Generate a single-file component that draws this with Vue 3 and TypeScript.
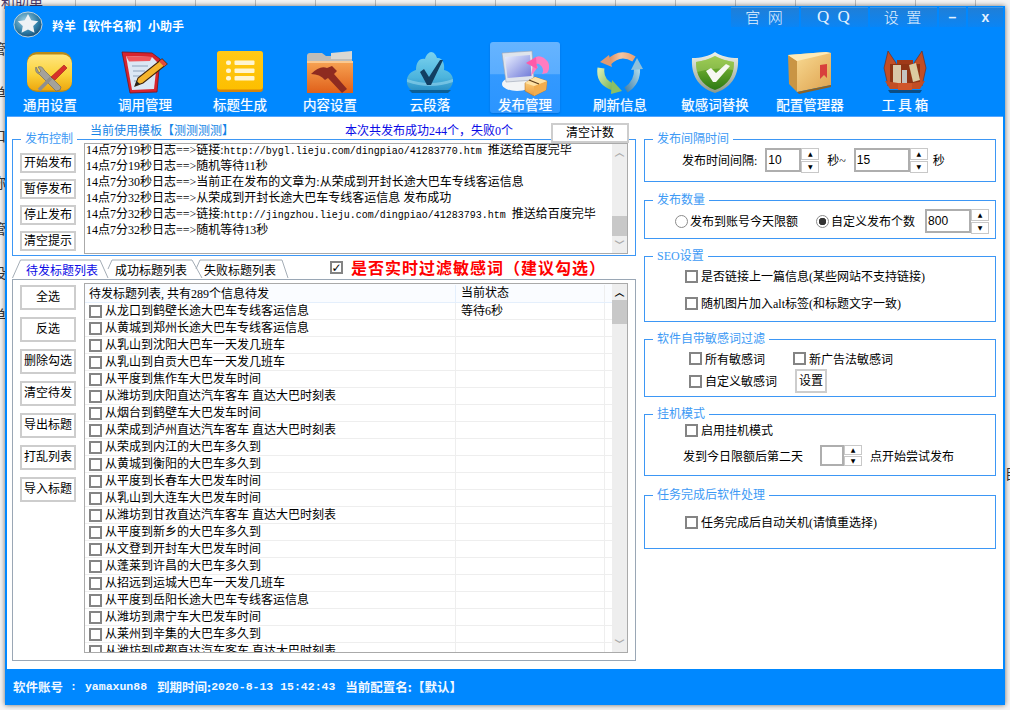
<template>
  <div class="desktop">
    <span class="stray top">和助单</span>
    <span v-for="y in strayLeft" :key="y.top" class="stray side" :style="{ top: y.top + 'px' }">{{ y.ch }}</span>
    <span class="stray right">目</span>

    <div class="window">
      <div class="titlebar">
        <svg class="logo" viewBox="0 0 30 28">
          <defs>
            <radialGradient id="lg" cx="0.4" cy="0.35" r="0.75">
              <stop offset="0" stop-color="#9fd0e4" />
              <stop offset="0.6" stop-color="#2e7ea8" />
              <stop offset="1" stop-color="#123f66" />
            </radialGradient>
          </defs>
          <ellipse cx="15" cy="14" rx="14.6" ry="13" fill="url(#lg)" stroke="#c4d4dc" stroke-width="1" />
          <path d="M15 3l3.4 6.6 7.2 1-5.2 5 1.3 7-6.7-3.4-6.7 3.4 1.3-7-5.2-5 7.2-1z" fill="#eef2f6" />
        </svg>
        <span class="app-name">羚羊【软件名称】小助手</span>
        <div class="top-btns">
          <div class="top-btn w68">官 网</div>
          <div class="top-btn w67 qq">Q Q</div>
          <div class="top-btn w67">设 置</div>
          <div class="top-btn w27 sym">–</div>
          <div class="top-btn w35 sym">x</div>
        </div>
      </div>

      <div class="toolbar">
        <div v-for="t in tools" :key="t.label" class="tool" :class="{ active: t.active, shift: t.shift }">
          <svg class="tool-icon" viewBox="0 0 48 48" v-html="t.icon"></svg>
          <span class="tool-label">{{ t.label }}</span>
        </div>
      </div>

      <div class="content">
        <div class="left">
          <div class="tmpl-row">
            <span class="tmpl">当前使用模板【测测测测】</span>
            <span class="count">本次共发布成功244个，失败0个</span>
            <button class="btn clear-count">清空计数</button>
          </div>

          <div class="group control">
            <span class="legend">发布控制</span>
            <div class="ctl-btns">
              <button v-for="b in controlBtns" :key="b" class="btn">{{ b }}</button>
            </div>
            <div class="log">
              <div class="log-lines">
                <div v-for="(l, i) in logs" :key="i" class="log-line">
                  {{ l.text }}<span v-if="l.url" class="url">{{ l.url }}</span>{{ l.tail }}
                </div>
              </div>
              <div class="vscroll log-scroll">
                <span class="arrow up">︿</span>
                <span class="thumb"></span>
                <span class="arrow down">﹀</span>
              </div>
            </div>
          </div>

          <div class="tabstrip">
            <svg class="tab-lines" width="280" height="22" viewBox="0 0 280 22">
              <path d="M0.5 21L8.5 3H88L96 21M96 12L100 3H180L190 21M184 12L188 3H270L276 21" fill="none" stroke="#a4adb6" />
            </svg>
            <span class="tab on">待发标题列表</span>
            <span class="tab">成功标题列表</span>
            <span class="tab">失败标题列表</span>
            <span class="box checked filter-box"><i>✓</i></span>
            <span class="filter-text">是否实时过滤敏感词（建议勾选）</span>
          </div>

          <div class="tabpanel">
            <div class="list-btns">
              <button v-for="b in listBtns" :key="b" class="btn">{{ b }}</button>
            </div>
            <div class="list">
              <div class="list-body">
                <div class="row head">
                  <span class="c1 head-c1">待发标题列表, 共有289个信息待发</span>
                  <span class="c2">当前状态</span>
                </div>
                <div v-for="(r, i) in rows" :key="i" class="row">
                  <span class="c1"><span class="box"></span>{{ r }}</span>
                  <span class="c2">{{ i === 0 ? '等待6秒' : '' }}</span>
                </div>
              </div>
              <div class="vscroll list-scroll">
                <span class="arrow up dark">︿</span>
                <span class="thumb"></span>
                <span class="arrow down">﹀</span>
              </div>
            </div>
          </div>
        </div>

        <div class="right">
          <div class="group g1">
            <span class="legend">发布间隔时间</span>
            <div class="line interval">
              <span>发布时间间隔:</span>
              <div class="spin w36 ml8"><span class="spin-val">10</span></div>
              <div class="spin-btns"><b>▲</b><b>▼</b></div>
              <span class="ml8">秒~</span>
              <div class="spin w56 ml8"><span class="spin-val">15</span></div>
              <div class="spin-btns"><b>▲</b><b>▼</b></div>
              <span class="ml5">秒</span>
            </div>
          </div>

          <div class="group g2">
            <span class="legend">发布数量</span>
            <div class="line amount">
              <span class="radio"></span><span>发布到账号今天限额</span>
              <span class="radio on ml18"></span><span>自定义发布个数</span>
              <div class="spin w46 ml10"><span class="spin-val">800</span></div>
              <div class="spin-btns"><b>▲</b><b>▼</b></div>
            </div>
          </div>

          <div class="group g3">
            <span class="legend">SEO设置</span>
            <div class="line chk first"><span class="box"></span>是否链接上一篇信息(某些网站不支持链接)</div>
            <div class="line chk second"><span class="box"></span>随机图片加入alt标签(和标题文字一致)</div>
          </div>

          <div class="group g4">
            <span class="legend">软件自带敏感词过滤</span>
            <div class="sens">
              <div class="sens-cell"><span class="box"></span>所有敏感词</div>
              <div class="sens-cell"><span class="box"></span>新广告法敏感词</div>
              <div class="sens-cell"><span class="box"></span>自定义敏感词</div>
              <div class="sens-cell"><button class="btn set-btn">设置</button></div>
            </div>
          </div>

          <div class="group g5">
            <span class="legend">挂机模式</span>
            <div class="line chk hang"><span class="box"></span>启用挂机模式</div>
            <div class="line next-day">
              <span>发到今日限额后第二天</span>
              <div class="spin small"></div>
              <div class="spin-btns small-btns"><b>▲</b><b>▼</b></div>
              <span class="ml8">点开始尝试发布</span>
            </div>
          </div>

          <div class="group g6">
            <span class="legend">任务完成后软件处理</span>
            <div class="line chk done"><span class="box"></span>任务完成后自动关机(请慎重选择)</div>
          </div>
        </div>
      </div>

      <div class="statusbar">
        <span>软件账号</span><span class="sb-lat colon">:</span><span class="sb-lat">yamaxun88</span>
        <span class="ml10">到期时间:</span><span class="sb-lat">2020-8-13 15:42:43</span>
        <span class="ml10">当前配置名:【默认】</span>
      </div>
    </div>
  </div>
</template>

<script setup lang="ts">
interface Tool {
  label: string;
  icon: string;
  active?: boolean;
  shift?: boolean;
}

interface LogLine {
  text: string;
  url?: string;
  tail?: string;
}

const strayLeft = [
  { top: 38, ch: '管' },
  { top: 82, ch: '单' },
  { top: 125, ch: '口' },
  { top: 172, ch: '称' },
  { top: 218, ch: '管' },
  { top: 262, ch: '设' },
  { top: 304, ch: '单' },
];

const controlBtns = ['开始发布', '暂停发布', '停止发布', '清空提示'];
const listBtns = ['全选', '反选', '删除勾选', '清空待发', '导出标题', '打乱列表', '导入标题'];

const logs: LogLine[] = [
  { text: '14点7分19秒日志==>链接:', url: 'http://bygl.lieju.com/dingpiao/41283770.htm', tail: '\u00a0\u00a0推送给百度完毕' },
  { text: '14点7分19秒日志==>随机等待11秒' },
  { text: '14点7分30秒日志==>当前正在发布的文章为:从荣成到开封长途大巴车专线客运信息' },
  { text: '14点7分32秒日志==>从荣成到开封长途大巴车专线客运信息 发布成功' },
  { text: '14点7分32秒日志==>链接:', url: 'http://jingzhou.lieju.com/dingpiao/41283793.htm', tail: '\u00a0\u00a0推送给百度完毕' },
  { text: '14点7分32秒日志==>随机等待13秒' },
];

const rows = [
  '从龙口到鹤壁长途大巴车专线客运信息',
  '从黄城到郑州长途大巴车专线客运信息',
  '从乳山到沈阳大巴车一天发几班车',
  '从乳山到自贡大巴车一天发几班车',
  '从平度到焦作车大巴发车时间',
  '从潍坊到庆阳直达汽车客车 直达大巴时刻表',
  '从烟台到鹤壁车大巴发车时间',
  '从荣成到泸州直达汽车客车 直达大巴时刻表',
  '从荣成到内江的大巴车多久到',
  '从黄城到衡阳的大巴车多久到',
  '从平度到长春车大巴发车时间',
  '从乳山到大连车大巴发车时间',
  '从潍坊到甘孜直达汽车客车 直达大巴时刻表',
  '从平度到新乡的大巴车多久到',
  '从文登到开封车大巴发车时间',
  '从蓬莱到许昌的大巴车多久到',
  '从招远到运城大巴车一天发几班车',
  '从平度到岳阳长途大巴车专线客运信息',
  '从潍坊到肃宁车大巴发车时间',
  '从莱州到辛集的大巴车多久到',
  '从潍坊到成都直达汽车客车 直达大巴时刻表',
];

const tools: Tool[] = [
  {
    label: '通用设置',
    icon: `<defs><linearGradient id="i1" x1="0" y1="0" x2="0" y2="1"><stop offset="0" stop-color="#ffe680"/><stop offset="0.55" stop-color="#fbd23a"/><stop offset="1" stop-color="#eda70e"/></linearGradient></defs>
      <rect x="1" y="4" width="45" height="40" rx="10" fill="#b98a18"/>
      <rect x="1" y="6.5" width="45" height="36" rx="9" fill="url(#i1)"/>
      <path d="M10 19c-1 3 0 6 3 7l17 17 4-1 1-3-17-17c-1-3-4-4-6-3l3 4-2 2z" fill="#a5a29a" stroke="#6f6c64" stroke-width=".7"/>
      <path d="M25 30L13 42" stroke="#8f8f8f" stroke-width="3.6"/>
      <path d="M38 17l3 3-12 12-4-3z" fill="#d8312a" stroke="#9c1c18" stroke-width=".6"/>`,
  },
  {
    label: '调用管理',
    icon: `<path d="M1 4l30 1 8 6-3 33-27 1z" fill="#d7242e" stroke="#7c1418" stroke-width=".8"/>
      <path d="M5 8l26 1 5 5-3 27-22 1z" fill="#dbe7f5"/>
      <path d="M5 8l26 1-2 4-21 .5z" fill="#f0565c"/>
      <path d="M11 18h16M12 23h12M12 28h9M13 33h7" stroke="#8ea3bd" stroke-width="1.2"/>
      <path d="M41 11l5 5-24 19-8 3 3-8z" fill="#f5b52c" stroke="#40240c" stroke-width="1.1"/>
      <path d="M14 38l1.5-5 3.500 3z" fill="#222"/>
      <path d="M41 11l5 5-3 2.500-5-5z" fill="#e24a3a"/>`,
  },
  {
    label: '标题生成',
    icon: `<defs><linearGradient id="i3" x1="0" y1="0" x2="0" y2="1"><stop offset="0" stop-color="#ffc916"/><stop offset="1" stop-color="#fdbf00"/></linearGradient></defs>
      <rect x="1" y="3" width="46" height="41" rx="3" fill="#d88408"/>
      <rect x="1" y="3" width="46" height="38.500" rx="3" fill="url(#i3)"/>
      <g fill="#fff5d0"><rect x="10" y="12.500" width="5" height="4.500" rx="2"/><rect x="10" y="20.500" width="5" height="4.500" rx="2"/><rect x="10" y="28" width="5" height="4.500" rx="2"/>
      <rect x="18.500" y="12.500" width="20" height="4.500" rx="1"/><rect x="18.500" y="20.500" width="20" height="4.500" rx="1"/><rect x="18.500" y="28" width="20" height="4.500" rx="1"/></g>`,
  },
  {
    label: '内容设置',
    shift: true,
    icon: `<defs><linearGradient id="i4" x1="0" y1="0" x2="0" y2="1"><stop offset="0" stop-color="#f7a454"/><stop offset="1" stop-color="#e0601a"/></linearGradient></defs>
      <path d="M1 8q0-3 3-3h12l4 3h22q4 0 4 4v8H1z" fill="#bdbcb8"/>
      <path d="M25 5l21-2v8H25z" fill="#d9d8d2"/>
      <path d="M1 13h46v32H1z" fill="url(#i4)"/>
      <path d="M1 13h46v2H1z" fill="#fbc88f"/>
      <path d="M5 26q9-9 16-6l5-2 5 5-3 3 13 15-5 4-14-15-3 2q-5-6-14-6z" fill="#8e2b20"/>`,
  },
  {
    label: '云段落',
    icon: `<defs><linearGradient id="i5" x1="0" y1="0" x2="0" y2="1"><stop offset="0" stop-color="#7cd2ee"/><stop offset="0.65" stop-color="#4cb4dd"/><stop offset="1" stop-color="#2a8fc4"/></linearGradient></defs>
      <path d="M10 43C3 43 0 37 1 31c1-5 5-8 9-9 0-7 3-12 9-11 1-4 4-7 6-7 3 0 5 3 6 6 5-1 8 5 7 12 5 1 9 5 9 10 0 6-4 11-9 11z" fill="url(#i5)"/>
      <path d="M6 45h36l3-3H3z" fill="#0d5f95"/>
      <path d="M1 31q23 8 46 0v3q-23 8-46 0z" fill="#a6e0f4" opacity=".5"/>
      <path d="M14 24l4-3 5 8 11-17h3L25 37h-4z" fill="#123f62"/>`,
  },
  {
    label: '发布管理',
    active: true,
    icon: `<defs><linearGradient id="i6" x1="0" y1="0" x2="1" y2="1"><stop offset="0" stop-color="#eaf0ff"/><stop offset="1" stop-color="#6e78d8"/></linearGradient><linearGradient id="i6b" x1="0" y1="0" x2="0" y2="1"><stop offset="0" stop-color="#ffdb8c"/><stop offset="1" stop-color="#ec9c3c"/></linearGradient></defs>
      <ellipse cx="16" cy="36" rx="15" ry="7" fill="#f2f4f6"/>
      <path d="M1 5l30-2 2 29-28 2z" fill="#dfe4ec" stroke="#9aa3b4" stroke-width=".6"/>
      <path d="M4 9l25-2 1.500 21-24 2z" fill="url(#i6)"/>
      <path d="M30 28l3-17c3-5 10-3 14 3 2 4 1 9-1 11l-5 1c2-3 1-7-2-9-2-2-4-1-4 0l2 2z" fill="#ff7cc0"/>
      <path d="M25 15l10-6 1 12z" fill="#ff5aa8"/>
      <path d="M24 35l10-6 12 4-1 9-12 6-9-5z" fill="url(#i6b)" stroke="#b06c1c" stroke-width=".5"/>
      <path d="M33 38l13-5-1 9-12 6z" fill="#f2ad4e"/>
      <path d="M24 35l9 3 13-5-12-4z" fill="#ffe2a4"/>
      <path d="M28 32l10 4" stroke="#5c3b18" stroke-width="1.200"/>`,
  },
  {
    label: '刷新信息',
    icon: `<defs><linearGradient id="i7a" x1="0" y1="0" x2="1" y2="0"><stop offset="0" stop-color="#d88a5e"/><stop offset=".5" stop-color="#f6c6a0"/><stop offset="1" stop-color="#e8a276"/></linearGradient><linearGradient id="i7b" x1="0" y1="0" x2="1" y2="1"><stop offset="0" stop-color="#d6ecae"/><stop offset="1" stop-color="#7eb65a"/></linearGradient><linearGradient id="i7c" x1="0" y1="1" x2="1" y2="0"><stop offset="0" stop-color="#4c84a8"/><stop offset="1" stop-color="#a6d4e8"/></linearGradient></defs>
      <path d="M12 15Q24 2 38 11" fill="none" stroke="url(#i7a)" stroke-width="6"/>
      <path d="M4 14l9-7 3 12z" fill="#e09a72"/>
      <path d="M5 20Q3 34 17 39" fill="none" stroke="url(#i7b)" stroke-width="7"/>
      <path d="M26 43L16 32l-1 14z" fill="#8cc064"/>
      <path d="M30 42Q42 34 41 20" fill="none" stroke="url(#i7c)" stroke-width="6"/>
      <path d="M41 10l-6 12 12-1z" fill="#8ec0da"/>`,
  },
  {
    label: '敏感词替换',
    icon: `<defs><linearGradient id="i8" x1="0" y1="0" x2="0" y2="1"><stop offset="0" stop-color="#8cc23c"/><stop offset="1" stop-color="#2c7a14"/></linearGradient><linearGradient id="i8r" x1="0" y1="0" x2="0" y2="1"><stop offset="0" stop-color="#eef2ec"/><stop offset="1" stop-color="#8c9a8a"/></linearGradient></defs>
      <path d="M24 4c6 4 14 6 23 6 1 16-5 29-23 35C6 39 0 26 1 10c9 0 17-2 23-6z" fill="url(#i8r)"/>
      <path d="M24 8c5 3 12 5 19 6 0 13-5 23-19 28C10 37 5 27 5 14c7-1 14-3 19-6z" fill="url(#i8)"/>
      <path d="M5 14c7-1 14-3 19-6 5 3 12 5 19 6 0 3 0 6-1 8q-18-4-36 2-1-5-1-10z" fill="#b4d872" opacity=".45"/>
      <path d="M15 23l5-3 5 5 10-9 4 2-14 16h-3z" fill="#f6f8f2"/>`,
  },
  {
    label: '配置管理器',
    icon: `<defs><linearGradient id="i9" x1="0" y1="0" x2="1" y2="1"><stop offset="0" stop-color="#fbe09a"/><stop offset="1" stop-color="#dea24e"/></linearGradient></defs>
      <path d="M2 7L40 4l5 1v32L11 44z" fill="url(#i9)"/>
      <path d="M2 7l9 6v31L3 36z" fill="#c99544"/>
      <path d="M2 7l9 6 34-8-5-1z" fill="#fdeab8"/>
      <path d="M34 17l7-1v14l-3-3-4 4z" fill="#d8403c"/>
      <path d="M11 44l34-7v2L13 46z" fill="#8c6224"/>`,
  },
  {
    label: '工 具 箱',
    icon: `<path d="M3 20L7 3l8 12 1 15-9 8z" fill="#c24e25" stroke="#6e2410" stroke-width=".6"/>
      <path d="M45 20L41 3l-8 12-1 15 9 8z" fill="#c24e25" stroke="#6e2410" stroke-width=".6"/>
      <path d="M16 12h16v4H16z" fill="#a03a18"/>
      <path d="M9 16h30v22H9z" fill="#8f3414"/>
      <path d="M12 17h8v18h-8z" fill="#d8c8a8"/>
      <path d="M21 22h5v16h-5z" fill="#c4c4c0"/>
      <path d="M28 17l7-2 4 17-7 2z" fill="#dccba0"/>
      <path d="M4 33l13 2v6H9z" fill="#c24e25"/>
      <path d="M44 33l-13 2v6h8z" fill="#c24e25"/>
      <path d="M17 35h14v9H17z" fill="#d0562a"/>
      <path d="M7 42h34l-2 3H9z" fill="#0c4d84"/>`,
  },
];
</script>

<style>
html,
body {
  margin: 0;
  background: #f4f4f4;
}
</style>

<style scoped>
* {
  box-sizing: border-box;
}

.desktop {
  position: relative;
  width: 1010px;
  height: 710px;
  padding: 6px 5px 5px;
  overflow: hidden;
  font-family: 'Liberation Serif', 'Noto Sans CJK SC', serif;
  font-size: 12px;
  color: #000;
  background:
    repeating-linear-gradient(90deg, transparent 0, transparent 59px, #bdbdbd 59px, #bdbdbd 60px) 16px 0 / 100% 6px no-repeat,
    #f4f4f4;
}

.stray {
  position: absolute;
  font-size: 14px;
  color: #333;
}

.stray.top {
  top: -9px;
  left: 1px;
  color: #4b3a6a;
}

.stray.side {
  left: -8px;
}

.stray.right {
  top: 447px;
  left: 1005px;
}

.window {
  position: relative;
  display: flex;
  flex-direction: column;
  width: 1000px;
  height: 699px;
  background: #0088ff;
  box-shadow: 0 0 5px rgba(0, 0, 0, 0.55);
}

.titlebar {
  display: flex;
  align-items: flex-start;
  height: 36px;
  padding-left: 8px;
  color: #fff;
}

.logo {
  width: 30px;
  height: 27px;
  margin-top: 5px;
}

.app-name {
  margin: 11px 0 0 9px;
  font-size: 12px;
  font-weight: 700;
  font-family: 'Noto Sans CJK SC', sans-serif;
}

.top-btns {
  display: flex;
  gap: 2px;
  margin-left: auto;
  margin-right: 2px;
}

.top-btn {
  height: 20px;
  margin-top: 1px;
  line-height: 18px;
  text-align: center;
  font-size: 15px;
  color: #e4f2ff;
  background: linear-gradient(#1f7fd8, #0a85f5);
  border-top: 1px solid #3d95e4;
  font-family: 'Noto Sans CJK SC', sans-serif;
  font-weight: 300;
  letter-spacing: 2px;
}

.qq {
  font-family: 'Liberation Serif', serif;
  font-size: 17px;
}

.sym {
  font-family: 'Liberation Sans', sans-serif;
  font-weight: 700;
  letter-spacing: 0;
  font-size: 14px;
}

.w68 { width: 68px; }
.w67 { width: 67px; }
.w27 { width: 27px; }
.w35 { width: 35px; }

.toolbar {
  display: flex;
  gap: 25px;
  height: 74px;
  padding-left: 10px;
}

.tool {
  display: flex;
  flex-direction: column;
  align-items: center;
  flex: none;
  width: 70px;
  height: 71px;
  padding-top: 6px;
  border-radius: 3px;
}

.tool.shift {
  transform: translateX(-5px);
}

.tool.active {
  background: linear-gradient(#66b4ff 0, #5aadff 45%, #3399ff 46%, #2b95ff 100%);
  box-shadow: 0 1px 2px rgba(0, 60, 140, 0.35);
}

.tool-icon {
  flex: none;
  width: 48px;
  height: 48px;
}

.tool-label {
  margin-top: -1px;
  line-height: 18px;
  font-size: 13.500px;
  color: #fff;
  white-space: nowrap;
  font-family: 'Noto Sans CJK SC', sans-serif;
  text-shadow: 0 0 1px rgba(255, 255, 255, 0.6);
}

.content {
  display: flex;
  gap: 8px;
  height: 553px;
  margin: 0 2px;
  padding: 6px 7px 0 5px;
  background: #fff;
  border-top: 1px solid #55a6ff;
}

.left {
  position: relative;
  flex: none;
  width: 624px;
}

.tmpl-row {
  display: flex;
  height: 16px;
  padding-left: 78px;
  line-height: 16px;
}

.tmpl {
  width: 255px;
  color: #1584e6;
}

.count {
  color: #0a0ae6;
}

.btn {
  display: block;
  padding: 0;
  background: #fff;
  border: 2px solid #cdcdcd;
  font: inherit;
  color: #000;
}

.clear-count {
  position: absolute;
  top: 0;
  left: 539px;
  z-index: 2;
  width: 78px;
  height: 20px;
  line-height: 16px;
}

.group {
  position: relative;
  border: 1px solid #3d97f5;
}

.legend {
  position: absolute;
  top: -8px;
  left: 8px;
  padding: 0 4px;
  line-height: 14px;
  color: #3d9af5;
  background: #fff;
  white-space: nowrap;
}

.control {
  display: flex;
  gap: 8px;
  height: 117px;
  padding: 3px 7px 0;
}

.ctl-btns {
  display: flex;
  flex-direction: column;
  gap: 6px;
  flex: none;
  width: 56px;
  margin-top: 10px;
}

.ctl-btns .btn {
  height: 20px;
  line-height: 16px;
}

.log {
  display: flex;
  width: 544px;
  height: 111px;
  border: 1px solid #aaa;
  overflow: hidden;
}

.log-lines {
  display: flex;
  flex-direction: column;
  gap: 4px;
  flex: 1;
  padding: 0 1px;
  white-space: nowrap;
  overflow: hidden;
}

.log-line {
  height: 12px;
  line-height: 12px;
}

.url {
  font-family: 'Liberation Mono', monospace;
  font-size: 10px;
}

.vscroll {
  position: relative;
  flex: none;
  display: flex;
  flex-direction: column;
  width: 15px;
  background: #eee;
  color: #aaa;
}

.arrow {
  display: block;
  height: 16px;
  line-height: 16px;
  text-align: center;
  font-size: 10px;
  font-weight: 700;
  font-family: 'Noto Sans CJK SC', sans-serif;
}

.arrow.dark {
  color: #000;
}

.arrow.down {
  margin-top: auto;
}

.thumb {
  display: block;
  background: #c8c8c8;
}

.log-scroll .thumb {
  height: 20px;
  margin-top: 56px;
}

.list-scroll .thumb {
  height: 24px;
}

.tabstrip {
  position: relative;
  display: flex;
  align-items: center;
  height: 21px;
  margin-top: 2px;
  padding-left: 14px;
}

.tab-lines {
  position: absolute;
  left: 0;
  top: -1px;
}

.tab {
  position: relative;
  width: 89px;
  white-space: nowrap;
  padding-top: 3px;
}

.tab.on {
  color: #0a0ae6;
}

.filter-box {
  margin: 0 0 2px 37px;
}

.filter-text {
  margin: 0 0 3px 5px;
  font-family: 'Noto Sans CJK SC', sans-serif;
  font-size: 16px;
  font-weight: 700;
  letter-spacing: 1px;
  color: #f00;
  white-space: nowrap;
}

.tabpanel {
  display: flex;
  gap: 8px;
  height: 382px;
  padding: 3px 7px 0;
  border: 1px solid #9aa7b5;
}

.list-btns {
  display: flex;
  flex-direction: column;
  gap: 7px;
  flex: none;
  width: 56px;
  margin-top: 2px;
}

.list-btns .btn {
  height: 25px;
  line-height: 21px;
}

.list {
  display: flex;
  width: 544px;
  height: 370px;
  border: 1px solid #aaa;
  overflow: hidden;
}

.list-body {
  flex: 1;
  overflow: hidden;
}

.row {
  display: flex;
  height: 17px;
  line-height: 16px;
  border-bottom: 1px solid #eee;
  white-space: nowrap;
}

.row.head {
  height: 19px;
  padding-top: 1px;
  background: #fafcff;
  border-bottom: 1px solid #e4effc;
}

.c1 {
  display: flex;
  align-items: center;
  width: 371px;
  padding-left: 4px;
  border-right: 1px solid #eee;
}

.head-c1 {
  border-right-color: #e4effc;
}

.c2 {
  width: 149px;
  padding-left: 5px;
  border-right: 1px solid #eee;
}

.box {
  display: inline-flex;
  align-items: center;
  justify-content: center;
  flex: none;
  width: 13px;
  height: 13px;
  margin-right: 3px;
  background: #fff;
  border: 2px solid #848484;
}

.box i {
  font-style: normal;
  font-weight: 700;
  font-size: 12px;
  line-height: 10px;
  font-family: 'DejaVu Sans', sans-serif;
}

.right {
  display: flex;
  flex-direction: column;
  flex: none;
  width: 352px;
  padding-top: 16px;
}

.line {
  display: flex;
  align-items: center;
  white-space: nowrap;
}

.g1 { height: 43px; }
.g2 { height: 39px; margin-top: 18px; }
.g3 { height: 66px; margin-top: 17px; }
.g4 { height: 58px; margin-top: 17px; }
.g5 { height: 62px; margin-top: 17px; }
.g6 { height: 54px; margin-top: 19px; }

.interval {
  padding: 8px 0 0 37px;
}

.spin {
  flex: none;
  height: 24px;
  line-height: 20px;
  border: 2px solid #aeaeae;
  overflow: hidden;
}

.spin-val {
  padding-left: 1px;
  font-family: 'Liberation Sans', sans-serif;
}

.w36 { width: 36px; }
.w46 { width: 46px; }
.w56 { width: 56px; }

.spin.small {
  width: 24px;
  height: 21px;
}

.spin-btns {
  display: flex;
  flex-direction: column;
  gap: 1px;
  flex: none;
  width: 18px;
  height: 24px;
}

.spin-btns b {
  flex: 1;
  font-size: 6px;
  line-height: 10px;
  text-align: center;
  border: 1px solid #c8c8c8;
  font-family: 'DejaVu Sans', sans-serif;
  font-weight: 400;
}

.small-btns {
  height: 21px;
}

.small-btns b {
  line-height: 8px;
}

.ml5 { margin-left: 5px; }
.ml8 { margin-left: 8px; }
.ml10 { margin-left: 10px; }
.ml18 { margin-left: 18px; }

.amount {
  padding: 8px 0 0 30px;
}

.radio {
  position: relative;
  flex: none;
  width: 13px;
  height: 13px;
  margin-right: 2px;
  background: #fff;
  border: 1px solid #8b8b8b;
  border-radius: 50%;
}

.radio.on {
  background: radial-gradient(circle, #333 0 3.500px, #fff 4px);
}

.chk.first { padding: 10px 0 0 40px; }
.chk.second { padding: 9px 0 0 40px; }

.sens {
  display: grid;
  grid-template-columns: 104px 1fr;
  grid-template-rows: 19px 24px;
  row-gap: 1px;
  padding: 9px 0 0 44px;
}

.sens-cell {
  display: flex;
  align-items: center;
  white-space: nowrap;
}

.set-btn {
  width: 32px;
  height: 24px;
  margin-left: 2px;
  line-height: 20px;
}

.hang {
  padding: 6px 0 0 40px;
}

.next-day {
  padding: 6px 0 0 38px;
}

.next-day > span:first-child {
  width: 137px;
}

.done {
  padding: 17px 0 0 40px;
}

.statusbar {
  display: flex;
  align-items: center;
  height: 36px;
  padding: 0 0 2px 8px;
  color: #f2f8ff;
  font-weight: 700;
  font-family: 'Noto Sans CJK SC', sans-serif;
  font-size: 12.500px;
  white-space: pre;
}

.sb-lat {
  font-family: 'Liberation Mono', monospace;
  font-size: 11.500px;
}

.colon {
  margin: 0 8px 0 7px;
}
</style>
